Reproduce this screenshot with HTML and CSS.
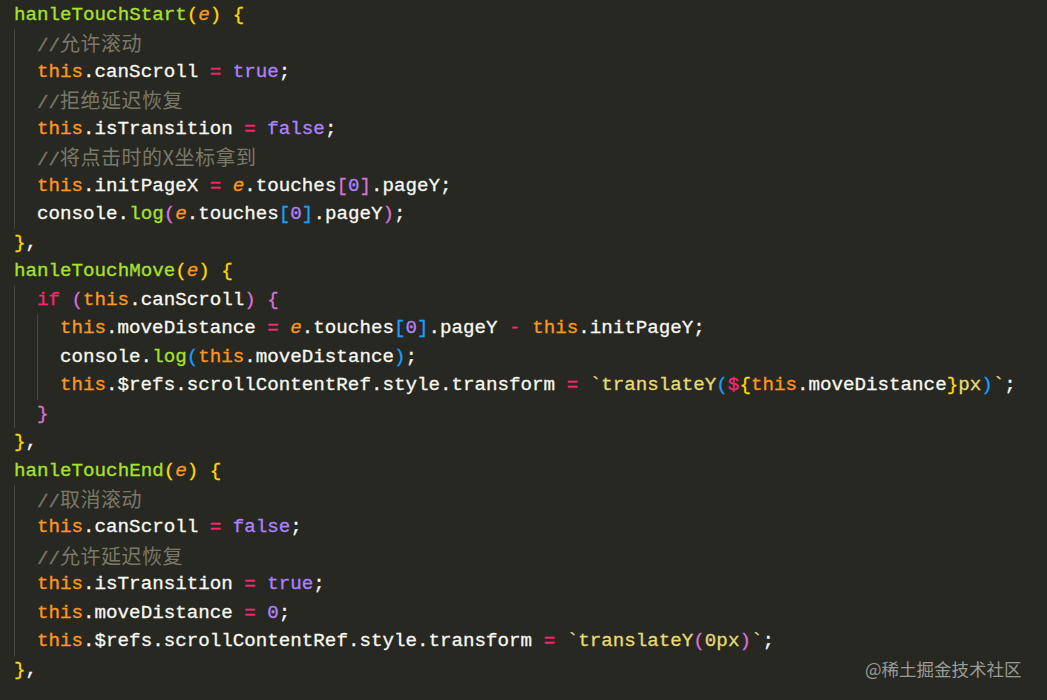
FILE: index.html
```html
<!DOCTYPE html>
<html lang="zh">
<head>
<meta charset="utf-8">
<title>code</title>
<link rel="stylesheet" href="styles.css">
</head>
<body>
<div class="code">
  <div class="ln"><span class="fn">hanleTouchStart</span><span class="b1">(</span><span class="pa">e</span><span class="b1">)</span> <span class="b1">{</span></div>
  <div class="blk">
    <div class="ln cm">//<span class="cjk">允许滚动</span></div>
    <div class="ln"><span class="th">this</span>.canScroll <span class="op">=</span> <span class="nu">true</span>;</div>
    <div class="ln cm">//<span class="cjk">拒绝延迟恢复</span></div>
    <div class="ln"><span class="th">this</span>.isTransition <span class="op">=</span> <span class="nu">false</span>;</div>
    <div class="ln cm">//<span class="cjk">将点击时的X坐标拿到</span></div>
    <div class="ln"><span class="th">this</span>.initPageX <span class="op">=</span> <span class="pa">e</span>.touches<span class="b2">[</span><span class="nu">0</span><span class="b2">]</span>.pageY;</div>
    <div class="ln">console.<span class="fn">log</span><span class="b2">(</span><span class="pa">e</span>.touches<span class="b3">[</span><span class="nu">0</span><span class="b3">]</span>.pageY<span class="b2">)</span>;</div>
  </div>
  <div class="ln"><span class="b1">}</span>,</div>
  <div class="ln"><span class="fn">hanleTouchMove</span><span class="b1">(</span><span class="pa">e</span><span class="b1">)</span> <span class="b1">{</span></div>
  <div class="blk">
    <div class="ln"><span class="op">if</span> <span class="b2">(</span><span class="th">this</span>.canScroll<span class="b2">)</span> <span class="b2">{</span></div>
    <div class="blk">
      <div class="ln"><span class="th">this</span>.moveDistance <span class="op">=</span> <span class="pa">e</span>.touches<span class="b3">[</span><span class="nu">0</span><span class="b3">]</span>.pageY <span class="op">-</span> <span class="th">this</span>.initPageY;</div>
      <div class="ln">console.<span class="fn">log</span><span class="b3">(</span><span class="th">this</span>.moveDistance<span class="b3">)</span>;</div>
      <div class="ln"><span class="th">this</span>.$refs.scrollContentRef.style.transform <span class="op">=</span> <span class="st">`translateY</span><span class="b3">(</span><span class="op">$</span><span class="b1">{</span><span class="th">this</span>.moveDistance<span class="b1">}</span><span class="st">px</span><span class="b3">)</span><span class="st">`</span>;</div>
    </div>
    <div class="ln"><span class="b2">}</span></div>
  </div>
  <div class="ln"><span class="b1">}</span>,</div>
  <div class="ln"><span class="fn">hanleTouchEnd</span><span class="b1">(</span><span class="pa">e</span><span class="b1">)</span> <span class="b1">{</span></div>
  <div class="blk">
    <div class="ln cm">//<span class="cjk">取消滚动</span></div>
    <div class="ln"><span class="th">this</span>.canScroll <span class="op">=</span> <span class="nu">false</span>;</div>
    <div class="ln cm">//<span class="cjk">允许延迟恢复</span></div>
    <div class="ln"><span class="th">this</span>.isTransition <span class="op">=</span> <span class="nu">true</span>;</div>
    <div class="ln"><span class="th">this</span>.moveDistance <span class="op">=</span> <span class="nu">0</span>;</div>
    <div class="ln"><span class="th">this</span>.$refs.scrollContentRef.style.transform <span class="op">=</span> <span class="st">`translateY</span><span class="b2">(</span><span class="st">0px</span><span class="b2">)</span><span class="st">`</span>;</div>
  </div>
  <div class="ln"><span class="b1">}</span>,</div>
</div>
<div class="mark">@稀土掘金技术社区</div>
</body>
</html>
```

FILE: styles.css
```css
html, body {
  margin: 0;
  padding: 0;
  background: #272822;
}
body {
  width: 1047px;
  height: 700px;
  overflow: hidden;
  position: relative;
}
.code {
  padding: 1px 0 0 14px;
  font-family: "Liberation Mono", "DejaVu Sans Mono", monospace;
  font-size: 19.2px;
  line-height: 28.48px;
  color: #f8f8f2;
  -webkit-text-stroke: 0.3px currentColor;
}
.ln {
  white-space: pre;
  height: 28.48px;
}
.blk {
  border-left: 1px solid #45463f;
  padding-left: 22px;
}
.fn { color: #a6e22e; }
.pa { color: #fd971f; font-style: italic; }
.th { color: #fd971f; }
.op { color: #f92672; }
.nu { color: #ae81ff; }
.st { color: #e6db74; }
.b1 { color: #ffd700; }
.b2 { color: #da70d6; }
.b3 { color: #179fff; }
.cm { color: #7b7868; }
.cjk {
  font-family: "Noto Sans CJK SC", sans-serif;
  font-size: 20px;
  letter-spacing: 0.5px;
  -webkit-text-stroke: 0;
}
.mark {
  position: absolute;
  left: 865px;
  top: 656px;
  font-family: "Noto Sans CJK SC", "Noto Sans", sans-serif;
  font-size: 17.5px;
  line-height: 26px;
  color: #9a9a96;
  white-space: nowrap;
}
```
